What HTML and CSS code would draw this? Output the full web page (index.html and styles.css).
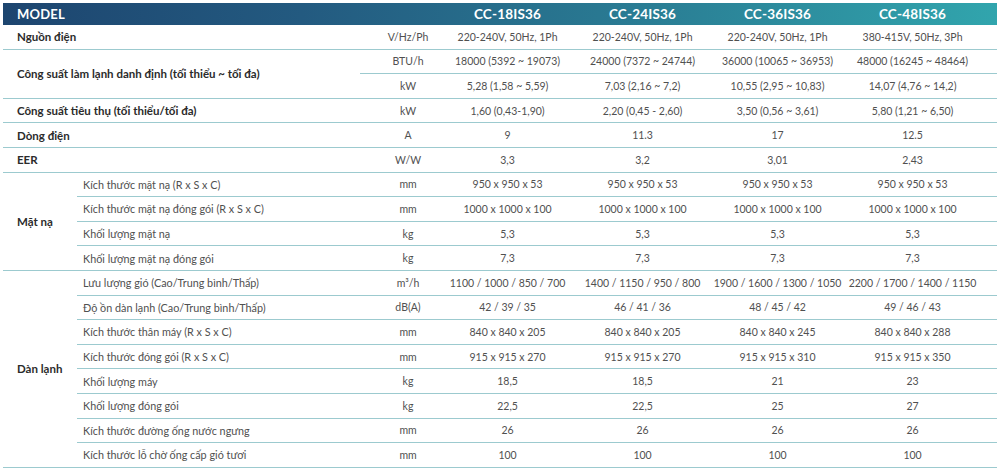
FILE: index.html
```html
<!DOCTYPE html>
<html lang="vi">
<head>
<meta charset="utf-8">
<title>Thông số kỹ thuật</title>
<link rel="stylesheet" href="styles.css">
</head>
<body>
<table class="spec">
  <colgroup>
    <col class="c-group"><col class="c-sub"><col class="c-unit">
    <col class="c-val"><col class="c-val"><col class="c-val"><col class="c-last">
  </colgroup>
  <thead>
    <tr class="head">
      <th colspan="3" class="h-model">MODEL</th>
      <th>CC-18IS36</th><th>CC-24IS36</th><th>CC-36IS36</th><th class="last">CC-48IS36</th>
    </tr>
  </thead>
  <tbody>
    <tr>
      <td colspan="2" class="grp">Nguồn điện</td><td class="unit">V/Hz/Ph</td>
      <td>220-240V, 50Hz, 1Ph</td><td>220-240V, 50Hz, 1Ph</td><td>220-240V, 50Hz, 1Ph</td><td class="last">380-415V, 50Hz, 3Ph</td>
    </tr>
    <tr>
      <td colspan="2" rowspan="2" class="grp">Công suất làm lạnh danh định (tối thiểu ~ tối đa)</td><td class="unit">BTU/h</td>
      <td>18000 (5392 ~ 19073)</td><td>24000 (7372 ~ 24744)</td><td>36000 (10065 ~ 36953)</td><td class="last">48000 (16245 ~ 48464)</td>
    </tr>
    <tr>
      <td class="unit">kW</td>
      <td>5,28 (1,58 ~ 5,59)</td><td>7,03 (2,16 ~ 7,2)</td><td>10,55 (2,95 ~ 10,83)</td><td class="last">14,07 (4,76 ~ 14,2)</td>
    </tr>
    <tr>
      <td colspan="2" class="grp">Công suất tiêu thụ (tối thiểu/tối đa)</td><td class="unit">kW</td>
      <td>1,60 (0,43-1,90)</td><td>2,20 (0,45 - 2,60)</td><td>3,50 (0,56 ~ 3,61)</td><td class="last">5,80 (1,21 ~ 6,50)</td>
    </tr>
    <tr>
      <td colspan="2" class="grp">Dòng điện</td><td class="unit">A</td>
      <td>9</td><td>11.3</td><td>17</td><td class="last">12.5</td>
    </tr>
    <tr>
      <td colspan="2" class="grp">EER</td><td class="unit">W/W</td>
      <td>3,3</td><td>3,2</td><td>3,01</td><td class="last">2,43</td>
    </tr>
    <tr>
      <td rowspan="4" class="grp">Mặt nạ</td><td class="sub">Kích thước mặt nạ (R x S x C)</td><td class="unit">mm</td>
      <td>950 x 950 x 53</td><td>950 x 950 x 53</td><td>950 x 950 x 53</td><td class="last">950 x 950 x 53</td>
    </tr>
    <tr>
      <td class="sub">Kích thước mặt nạ đóng gói (R x S x C)</td><td class="unit">mm</td>
      <td>1000 x 1000 x 100</td><td>1000 x 1000 x 100</td><td>1000 x 1000 x 100</td><td class="last">1000 x 1000 x 100</td>
    </tr>
    <tr>
      <td class="sub">Khối lượng mặt nạ</td><td class="unit">kg</td>
      <td>5,3</td><td>5,3</td><td>5,3</td><td class="last">5,3</td>
    </tr>
    <tr>
      <td class="sub">Khối lượng mặt nạ đóng gói</td><td class="unit">kg</td>
      <td>7,3</td><td>7,3</td><td>7,3</td><td class="last">7,3</td>
    </tr>
    <tr>
      <td rowspan="8" class="grp">Dàn lạnh</td><td class="sub">Lưu lượng gió (Cao/Trung bình/Thấp)</td><td class="unit">m³/h</td>
      <td>1100 / 1000 / 850 / 700</td><td>1400 / 1150 / 950 / 800</td><td>1900 / 1600 / 1300 / 1050</td><td class="last">2200 / 1700 / 1400 / 1150</td>
    </tr>
    <tr>
      <td class="sub">Độ ồn dàn lạnh (Cao/Trung bình/Thấp)</td><td class="unit">dB(A)</td>
      <td>42 / 39 / 35</td><td>46 / 41 / 36</td><td>48 / 45 / 42</td><td class="last">49 / 46 / 43</td>
    </tr>
    <tr>
      <td class="sub">Kích thước thân máy (R x S x C)</td><td class="unit">mm</td>
      <td>840 x 840 x 205</td><td>840 x 840 x 205</td><td>840 x 840 x 245</td><td class="last">840 x 840 x 288</td>
    </tr>
    <tr>
      <td class="sub">Kích thước đóng gói (R x S x C)</td><td class="unit">mm</td>
      <td>915 x 915 x 270</td><td>915 x 915 x 270</td><td>915 x 915 x 310</td><td class="last">915 x 915 x 350</td>
    </tr>
    <tr>
      <td class="sub">Khối lượng máy</td><td class="unit">kg</td>
      <td>18,5</td><td>18,5</td><td>21</td><td class="last">23</td>
    </tr>
    <tr>
      <td class="sub">Khối lượng đóng gói</td><td class="unit">kg</td>
      <td>22,5</td><td>22,5</td><td>25</td><td class="last">27</td>
    </tr>
    <tr>
      <td class="sub">Kích thước đường ống nước ngưng</td><td class="unit">mm</td>
      <td>26</td><td>26</td><td>26</td><td class="last">26</td>
    </tr>
    <tr>
      <td class="sub">Kích thước lỗ chờ ống cấp gió tươi</td><td class="unit">mm</td>
      <td>100</td><td>100</td><td>100</td><td class="last">100</td>
    </tr>
  </tbody>
</table>
</body>
</html>
```

FILE: styles.css
```css
html, body {
  margin: 0;
  padding: 0;
  background: #ffffff;
}
body {
  padding: 3px 3px 0 3px;
  font-family: "Lato", "Open Sans", sans-serif;
}
.spec {
  width: 994px;
  table-layout: fixed;
  border-collapse: separate;
  border-spacing: 0;
  background: linear-gradient(90deg, #1d456f 0%, #235a80 30%, #2a7d94 65%, #31a5ad 100%) no-repeat;
  background-size: 100% 22px;
}
.c-group { width: 74px; }
.c-sub { width: 283px; }
.c-unit { width: 80px; }
.c-val { width: 135px; }
.c-last { width: 152px; }

.head th {
  height: 22px;
  padding: 0;
  color: #ffffff;
  font-weight: 700;
  font-size: 13.5px;
  letter-spacing: 0.2px;
  text-align: center;
  vertical-align: middle;
  white-space: nowrap;
}
.head th.h-model {
  text-align: left;
  padding-left: 14px;
  font-size: 13px;
}
.head th.last { padding-right: 17px; }

.spec td {
  height: 24.6px;
  box-sizing: border-box;
  padding: 0;
  border-bottom: 1.5px solid #9ccacf;
  font-size: 10.5px;
  color: #505050;
  text-align: center;
  vertical-align: middle;
  white-space: nowrap;
}
.spec td.grp {
  text-align: left;
  padding-left: 14px;
  font-weight: 700;
  color: #2b2b2b;
  font-size: 11.5px;
  white-space: normal;
}
.spec td.sub {
  text-align: left;
  padding-left: 6px;
  font-size: 10.8px;
}
.spec td.unit { padding-left: 16px; }
.spec td.last { padding-right: 17px; }
```
